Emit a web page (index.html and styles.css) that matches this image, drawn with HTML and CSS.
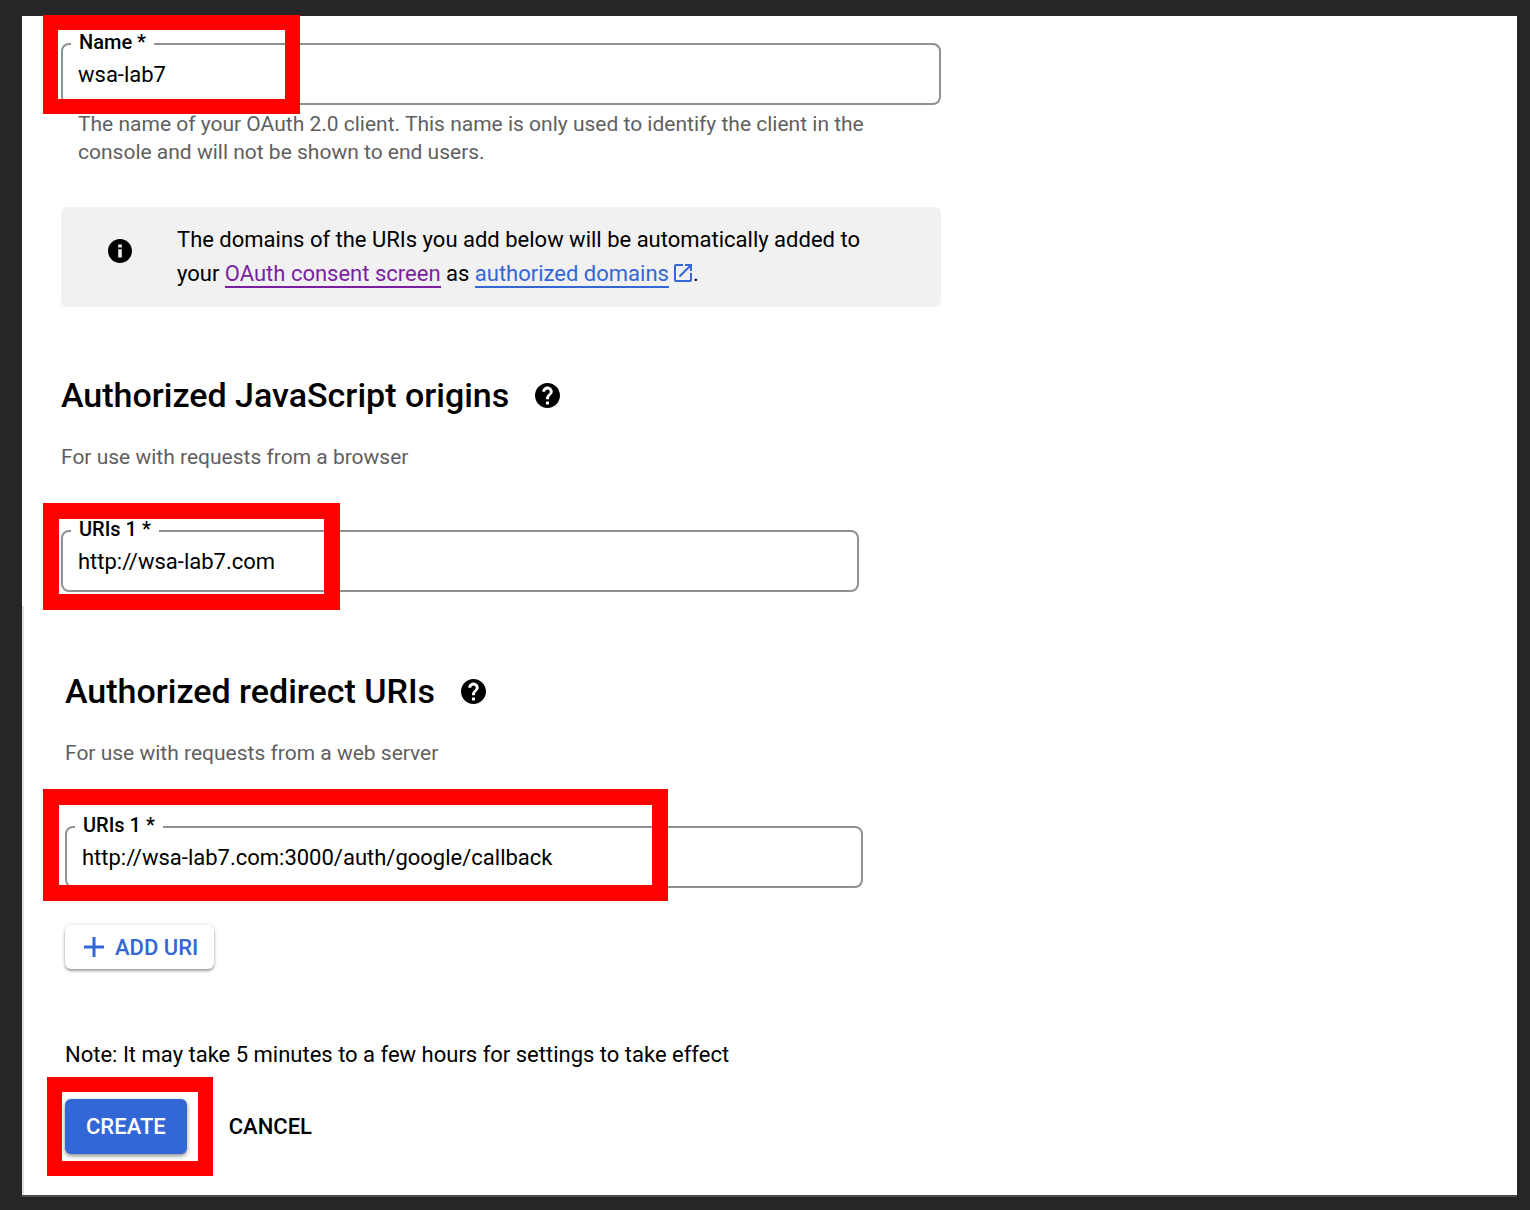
FILE: index.html
```html
<!DOCTYPE html>
<html lang="en">
<head>
<meta charset="utf-8">
<meta name="viewport" content="width=device-width, initial-scale=1">
<title>Create OAuth client ID</title>
<link rel="stylesheet" href="styles.css">
</head>
<body>
<main class="panel">
  <form>
    <section class="section">
      <div class="block block-wide">
        <fieldset class="field">
          <legend><label for="name">Name *</label></legend>
          <input id="name" type="text" value="wsa-lab7">
        </fieldset>
        <span class="mark mark-name"></span>
      </div>
      <p class="hint">The name of your OAuth 2.0 client. This name is only used to identify the client in the console and will not be shown to end users.</p>

      <div class="info block-wide">
        <svg class="info-icon" viewBox="2 2 20 20" aria-hidden="true"><path d="M12 2C6.480 2 2 6.480 2 12s4.480 10 10 10 10-4.480 10-10S17.520 2 12 2zm1.500 15.500h-3v-7h3v7zm0-8.500h-3V6.500h3V9z"/></svg>
        <p>The domains of the URIs you add below will be automatically added to your <a class="visited" href="#consent">OAuth consent screen</a> as <a href="#domains">authorized domains</a><svg class="external" viewBox="3 3 18 18" aria-hidden="true"><path d="M19 19H5V5h7V3H5a2 2 0 0 0-2 2v14a2 2 0 0 0 2 2h14c1.100 0 2-.9 2-2v-7h-2v7zM14 3v2h3.590l-9.830 9.830 1.410 1.410L19 6.410V10h2V3h-7z"/></svg>.</p>
      </div>

      <h2>Authorized JavaScript origins
        <svg class="help" viewBox="2 2 20 20" aria-hidden="true"><path d="M12 2C6.480 2 2 6.480 2 12s4.480 10 10 10 10-4.480 10-10S17.520 2 12 2zm1.200 17.200h-2.400v-2.400h2.400v2.400zm1.870-7.950l-.9.92C13.450 12.900 13.200 13.500 13.200 15h-2.400v-.5c0-1.100.45-2.100 1.170-2.830l1.240-1.260c.37-.36.59-.86.59-1.410 0-1-.8-1.800-1.800-1.800s-1.800.8-1.800 1.800H7.800c0-2.210 1.990-4.200 4.200-4.200s4.200 1.990 4.200 4.200c0 .88-.56 1.680-1.130 2.250z"/></svg>
      </h2>
      <p class="sub">For use with requests from a browser</p>
      <div class="block">
        <fieldset class="field">
          <legend><label for="origin">URIs 1 *</label></legend>
          <input id="origin" type="text" value="http://wsa-lab7.com">
        </fieldset>
        <span class="mark mark-origin"></span>
      </div>
    </section>

    <section class="section section-redirect">
      <h2>Authorized redirect URIs
        <svg class="help" viewBox="2 2 20 20" aria-hidden="true"><path d="M12 2C6.480 2 2 6.480 2 12s4.480 10 10 10 10-4.480 10-10S17.520 2 12 2zm1.200 17.200h-2.400v-2.400h2.400v2.400zm1.870-7.950l-.9.92C13.450 12.900 13.200 13.500 13.200 15h-2.400v-.5c0-1.100.45-2.100 1.170-2.830l1.240-1.260c.37-.36.59-.86.59-1.410 0-1-.8-1.800-1.800-1.800s-1.800.8-1.800 1.800H7.800c0-2.210 1.990-4.200 4.200-4.200s4.200 1.990 4.200 4.200c0 .88-.56 1.680-1.130 2.250z"/></svg>
      </h2>
      <p class="sub">For use with requests from a web server</p>
      <div class="block">
        <fieldset class="field">
          <legend><label for="redirect">URIs 1 *</label></legend>
          <input id="redirect" type="text" value="http://wsa-lab7.com:3000/auth/google/callback">
        </fieldset>
        <span class="mark mark-redirect"></span>
      </div>
      <button class="add" type="button">
        <svg viewBox="0 0 22 22" aria-hidden="true"><path d="M9.500 1h3v8.500H21v3h-8.500V21h-3v-8.500H1v-3h8.500z"/></svg>
        ADD URI
      </button>
      <p class="note">Note: It may take 5 minutes to a few hours for settings to take effect</p>
      <div class="actions">
        <div class="create-wrap">
          <button class="create" type="submit">CREATE</button>
          <span class="mark mark-create"></span>
        </div>
        <button class="cancel" type="button">CANCEL</button>
      </div>
    </section>
  </form>
</main>
</body>
</html>
```

FILE: styles.css
```css
* {
  box-sizing: border-box;
}

body {
  margin: 0;
  padding: 16px 13px 13px 22px;
  background: #262626;
  color: #000;
  font-family: Roboto, "Liberation Sans", sans-serif;
  font-size: 22px;
}

p,
h2 {
  margin: 0;
}

button,
input {
  font: inherit;
  color: inherit;
}

.panel {
  background: #fff;
  border-bottom: 2px solid #4c4c4c;
}

.section {
  padding: 16px 40px 14px 39px;
}

.section-redirect {
  padding: 61px 40px 41px 41px;
  border-left: 2px solid #e0e0e0;
}

.block {
  position: relative;
  max-width: 798px;
}

.block-wide {
  max-width: 880px;
}

.field {
  margin: 0;
  padding: 0 15px 11px;
  min-width: 0;
  border: 2px solid #8d9297;
  border-radius: 8px;
}

.field legend {
  margin-left: -7px;
  padding: 0 8px 4px;
  font-size: 20px;
  font-weight: 500;
  line-height: 20px;
}

.field input {
  display: block;
  width: 100%;
  height: 36px;
  padding: 0;
  border: 0;
  outline: 0;
  background: transparent;
}

.hint,
.sub {
  color: #5f5f5f;
  font-size: 21px;
  line-height: 28px;
}

.hint {
  max-width: 840px;
  margin-top: 5px;
  padding: 0 16px 0 17px;
}

.info {
  display: flex;
  gap: 45px;
  margin-top: 41px;
  padding: 16px 48px 16px 47px;
  border-radius: 6px;
  background: #f1f1f1;
  line-height: 34px;
}

.info-icon {
  flex: none;
  width: 24px;
  height: 24px;
  margin-top: 16px;
}

.info a {
  border-bottom: 2px solid currentColor;
  color: #3367d6;
  text-decoration: none;
}

.info .visited {
  color: #7b1fa2;
}

.external {
  width: 18px;
  height: 18px;
  margin: 0 1px 0 5px;
  vertical-align: -1px;
  fill: #3367d6;
}

h2 {
  display: flex;
  align-items: center;
  gap: 26px;
  font-size: 34px;
  font-weight: 500;
  line-height: 48px;
}

.info + h2 {
  margin-top: 64px;
}

.help {
  width: 25px;
  height: 25px;
}

.sub {
  margin: 24px 0 48px;
}

.add {
  display: flex;
  align-items: center;
  gap: 10px;
  height: 44px;
  margin-top: 37px;
  padding: 0 16px 0 18px;
  border: 0;
  border-radius: 6px;
  background: #fff;
  box-shadow: 0 2px 3px rgba(0, 0, 0, 0.35), 0 0 4px rgba(0, 0, 0, 0.12);
  color: #3367d6;
  font-weight: 500;
}

.add svg {
  width: 22px;
  height: 22px;
  fill: #3367d6;
}

.note {
  margin: 72px 0 30px;
  line-height: 28px;
}

.actions {
  display: flex;
  gap: 42px;
}

.create-wrap {
  position: relative;
}

.create,
.cancel {
  height: 55px;
  border: 0;
  font-weight: 500;
}

.create {
  padding: 0 21px;
  border-radius: 6px;
  background: #3367d6;
  box-shadow: 0 2px 4px rgba(0, 0, 0, 0.45);
  color: #fff;
}

.cancel {
  padding: 0;
  background: transparent;
}

/* Red boxes that point out the parts to fill in */
.mark {
  position: absolute;
  border: 16px solid #f00;
  pointer-events: none;
}

.mark-name {
  top: -17px;
  left: -18px;
  width: 257px;
  height: 99px;
  border-width: 15px;
}

.mark-origin {
  top: -16px;
  left: -18px;
  width: 297px;
  height: 107px;
}

.mark-redirect {
  top: -26px;
  left: -22px;
  width: 625px;
  height: 112px;
}

.mark-create {
  top: -22px;
  left: -18px;
  width: 166px;
  height: 99px;
  border-width: 15px;
}
```
